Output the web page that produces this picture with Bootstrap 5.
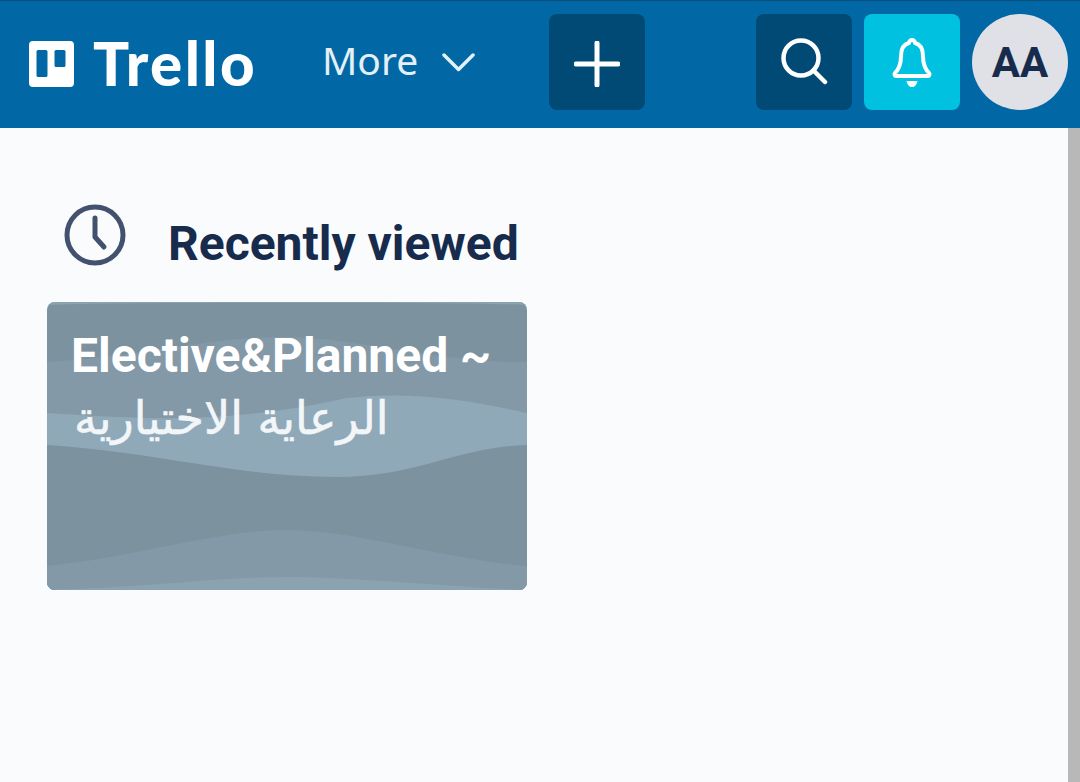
<!DOCTYPE html>
<html lang="en">
<head>
  <meta charset="UTF-8" />
  <meta name="viewport" content="width=device-width, initial-scale=1.0" />
  <title>Trello</title>
  <link href="https://cdn.jsdelivr.net/npm/bootstrap@5.3.0/dist/css/bootstrap.min.css" rel="stylesheet">
  <style>
    html, body { height: 100%; overflow: hidden; }
    body { background: #fafbfc; font-family: Roboto, "Liberation Sans", sans-serif; color: #172b4d; }
    .side-scroll { background: #b8b8b8; width: 12px; height: 654px; }
    .top-bar { height: 128px; background: #0268a5; border-top: 1px solid #0a4f7c; padding: 13px 12px 18px 29px; }
    .logo-text { font-family: Lato, sans-serif; font-weight: 900; font-size: 60px; line-height: 1; color: #fff; margin-left: 19px; padding-top: 2px; width: 162px; white-space: nowrap; letter-spacing: 2.400px; }
    .more-link { font-family: "Noto Sans", sans-serif; font-size: 39px; color: #e4f0f6; margin-left: 67px; text-decoration: none; width: 227px; padding-bottom: 4px; }
    .bar-btn { width: 96px; height: 96px; border: 0; border-radius: 8px; padding: 0; background: #014a75; color: #fff; }
    .bar-btn.bell-btn { background: #00c2e0; }
    .btn-row { column-gap: 12px; }
    .avatar-btn { width: 96px; height: 96px; border-radius: 50%; background: #dfe1e6; color: #172b4d; font-weight: 700; font-size: 42px; }
    .recent-head { padding: 76px 0 0 64px; height: 174px; }
    .recent-head h2 { font-size: 48px; font-weight: 700; margin: -2px 0 0 42px; color: #172b4d; line-height: 1; }
    .board-tile { width: 480px; height: 288px; margin-left: 47px; border-radius: 8px; overflow: hidden; background: #7d929f; }
    .board-waves { top: 0; left: 0; width: 100%; height: 100%; }
    .board-name { font-size: 48px; font-weight: 700; line-height: 62px; color: #fff; padding: 23px 24px; margin: 0; }
    .board-name .ar { font-family: "DejaVu Sans", sans-serif; font-weight: 400; font-size: 46px; color: #f2f6f8; -webkit-text-stroke: .6px #f2f6f8; margin-left: 3px; }
  </style>
</head>
<body>
  <nav class="top-bar d-flex align-items-center">
    <svg class="mt-1" width="45" height="46" viewBox="0 0 45 46"><path fill="#fff" fill-rule="evenodd" d="M4 0h37a4 4 0 0 1 4 4v38a4 4 0 0 1-4 4H4a4 4 0 0 1-4-4V4a4 4 0 0 1 4-4zM9 9a1.500 1.500 0 0 0-1.500 1.500v24a1.500 1.500 0 0 0 1.500 1.500h8a1.500 1.500 0 0 0 1.500-1.500v-24A1.500 1.500 0 0 0 17 9zM27 9a1.500 1.500 0 0 0-1.500 1.500v14a1.500 1.500 0 0 0 1.500 1.500h8a1.500 1.500 0 0 0 1.500-1.500v-14A1.500 1.500 0 0 0 35 9z"/></svg>
    <span class="logo-text">Trello</span>
    <a href="#" class="more-link d-flex align-items-center">More
      <svg class="ms-4 mt-1" width="33" height="20" viewBox="0 0 33 20"><path d="M2 3l14.500 14.500L31 3" fill="none" stroke="#e4f0f6" stroke-width="3.500" stroke-linecap="round" stroke-linejoin="round"/></svg>
    </a>
    <button class="bar-btn" aria-label="Create">
      <svg class="mt-1" width="46" height="46" viewBox="0 0 46 46"><path d="M23 2v42M2 23h42" stroke="#fff" stroke-width="5" stroke-linecap="round"/></svg>
    </button>
    <div class="d-flex btn-row ms-auto">
      <button class="bar-btn" aria-label="Search">
        <svg width="48" height="50" viewBox="0 0 48 50"><circle cx="21" cy="21" r="17.500" fill="none" stroke="#fff" stroke-width="4.500"/><path d="M33.500 33.500l11.500 11.500" stroke="#fff" stroke-width="4.500" stroke-linecap="round"/></svg>
      </button>
      <button class="bar-btn bell-btn" aria-label="Notifications">
        <svg class="mt-1" width="42" height="52" viewBox="0 0 42 52"><path d="M21 2a3 3 0 0 1 3 3c6 1.500 8 7 8 13 0 7 1 12 6 17 1 1 .4 3-1 3H5c-1.400 0-2-2-1-3 5-5 6-10 6-17 0-6 2-11.500 8-13a3 3 0 0 1 3-3z" fill="none" stroke="#fff" stroke-width="4" stroke-linejoin="round"/><path d="M15.500 43h11c-1 4-2.500 6-5.500 6s-4.500-2-5.500-6z" fill="#fff"/></svg>
      </button>
      <div class="avatar-btn d-flex align-items-center justify-content-center">AA</div>
    </div>
  </nav>
  <div class="d-flex">
    <main class="flex-grow-1">
      <div class="recent-head d-flex align-items-start">
        <svg class="flex-shrink-0" width="62" height="62" viewBox="0 0 62 62"><circle cx="31" cy="31" r="28" fill="none" stroke="#42526e" stroke-width="5"/><path d="M31 14v19l9 10" fill="none" stroke="#42526e" stroke-width="5" stroke-linecap="round" stroke-linejoin="round"/></svg>
        <h2 class="mt-3">Recently viewed</h2>
      </div>
      <div class="board-tile position-relative">
        <svg class="board-waves position-absolute" viewBox="0 0 480 288" preserveAspectRatio="none">
          <path fill="#8ba2b0" d="M0 3C60 0 420 0 480 3V0H0z"/>
          <path fill="#8399a7" d="M0 60C90 55 170 34 240 35S400 62 480 60V288H0z"/>
          <path fill="#90a9b9" d="M0 111C110 118 180 122 300 96 370 88 430 100 480 111V288H0z"/>
          <path fill="#7d929f" d="M0 143C110 150 190 175 290 175 370 175 410 145 480 143V288H0z"/>
          <path fill="#8399a7" d="M0 264C90 255 170 228 240 228S400 258 480 264V288H0z"/>
          <path fill="#8ba2b0" d="M0 288C110 285 170 275 240 275S400 285 480 288z"/>
        </svg>
        <h3 class="board-name position-relative">Elective&amp;Planned ~ <span class="ar" dir="rtl">الرعاية الاختيارية</span></h3>
      </div>
    </main>
    <div class="side-scroll flex-shrink-0"></div>
  </div>
  <script src="https://cdn.jsdelivr.net/npm/bootstrap@5.3.0/dist/js/bootstrap.bundle.min.js"></script>
</body>
</html>
